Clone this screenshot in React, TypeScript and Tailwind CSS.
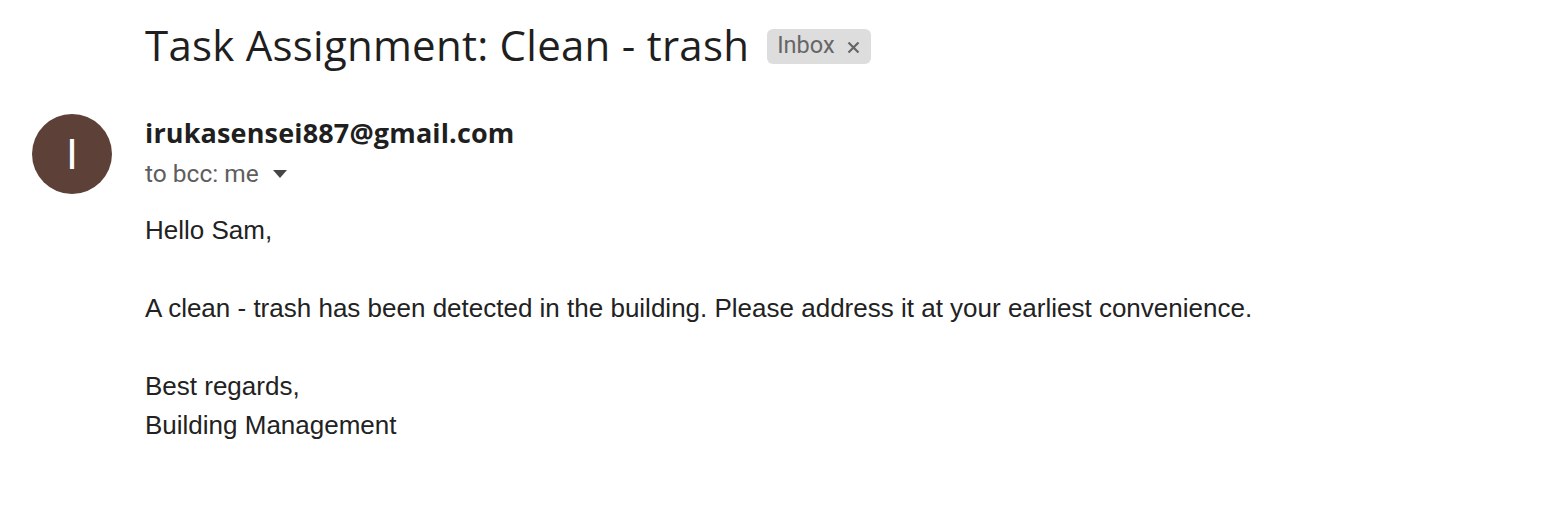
import React from "react";

export default function App() {
  return (
    <div className="w-[1556px] h-[512px] bg-white overflow-hidden">
      <div className="pl-[145px] pt-[20px] flex items-center gap-[18px]">
        <h1 className="text-[42px] leading-[50px] text-[#1f1f1f] font-['Open_Sans',sans-serif] tracking-[0.25px]">
          Task Assignment: Clean - trash
        </h1>
        <span className="flex items-center gap-[12px] h-[35px] pl-[10px] pr-[11px] rounded-[6px] bg-[#dddddd] text-[#666666] text-[23.5px] font-['Roboto',sans-serif] mt-[2px]">
          Inbox
          <svg width="13" height="13" viewBox="0 0 13 13" className="mt-[2px]">
            <path d="M1.5 1.5 L11.5 11.5 M11.5 1.5 L1.5 11.5" stroke="#666666" strokeWidth="2.2" />
          </svg>
        </span>
      </div>

      <div className="flex mt-[44px]">
        <div className="w-[145px] shrink-0 pl-[32px]">
          <div className="w-[80px] h-[80px] rounded-full bg-[#5d4037] flex items-center justify-center text-white text-[42px] font-['Roboto',sans-serif]">
            I
          </div>
        </div>
        <div className="flex flex-col pt-[4px]">
          <div className="text-[27px] leading-[30px] font-bold text-[#1f1f1f] font-['Open_Sans',sans-serif] tracking-[0.15px]">
            irukasensei887@gmail.com
          </div>
          <div className="flex items-center gap-[13px] mt-[11px] text-[24.5px] leading-[30px] text-[#5e5e5e] font-['Roboto',sans-serif]">
            to bcc: me
            <svg width="16" height="10" viewBox="0 0 16 10">
              <path d="M1 1 L15 1 L8 9 Z" fill="#444746" />
            </svg>
          </div>
          <div className="mt-[22px] text-[26px] leading-[39px] text-[#222222] font-['Liberation_Sans',Arial,sans-serif]">
            <p>Hello Sam,</p>
            <p className="mt-[39px]">
              A clean - trash has been detected in the building. Please address it at your earliest convenience.
            </p>
            <p className="mt-[39px]">Best regards,</p>
            <p>Building Management</p>
          </div>
        </div>
      </div>
    </div>
  );
}
